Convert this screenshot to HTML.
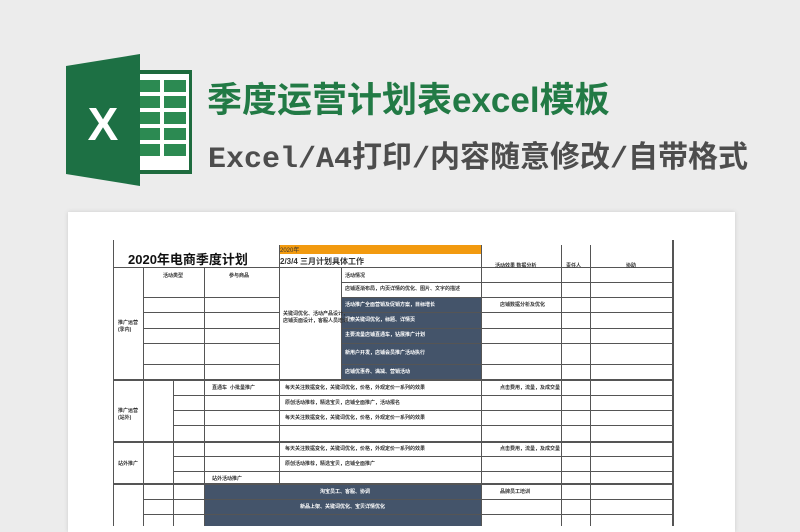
<!DOCTYPE html>
<html><head><meta charset="utf-8"><style>
body{margin:0;width:800px;height:526px;overflow:hidden;background:#ececec;font-family:"Liberation Sans","Noto Sans CJK SC",sans-serif;position:relative}
.a{position:absolute}
.h{position:absolute;height:1px;background:#555}
.v{position:absolute;width:1px;background:#555}
.t{position:absolute;font-size:5px;color:#333;white-space:nowrap;font-weight:bold}
</style></head><body>
<svg class="a" style="left:62px;top:54px" width="135" height="134" viewBox="0 0 135 134">
<rect x="68" y="16" width="62" height="104" fill="#1e6b3e"/>
<rect x="72" y="20" width="55" height="96" fill="#fff"/>
<g fill="#2c8a52">
<rect x="78" y="26" width="20" height="12"/><rect x="102" y="26" width="22" height="12"/>
<rect x="78" y="42" width="20" height="12"/><rect x="102" y="42" width="22" height="12"/>
<rect x="78" y="58" width="20" height="12"/><rect x="102" y="58" width="22" height="12"/>
<rect x="78" y="74" width="20" height="12"/><rect x="102" y="74" width="22" height="12"/>
<rect x="78" y="90" width="20" height="12"/><rect x="102" y="90" width="22" height="12"/>
</g>
<polygon points="4,12 78,0 78,132 4,120" fill="#1d7044"/>
<text x="41" y="86" fill="#fff" font-size="46" font-weight="bold" text-anchor="middle" font-family="Liberation Sans">X</text>
</svg>
<div class="a" style="left:207px;top:72px;font-size:35px;font-weight:bold;color:#227a45">季度运营计划表excel模板</div>
<div class="a" style="left:208px;top:132px;font-size:30px;color:#4d4d4d;font-weight:bold;font-family:'Liberation Mono','Noto Sans CJK SC',monospace">Excel/A4打印/内容随意修改/自带格式</div>
<div class="a" style="left:68px;top:212px;width:667px;height:320px;background:#fff;box-shadow:0 0 4px #ccc"></div>
<div class="a" style="left:279px;top:245px;width:202px;height:9px;background:#f29a0f"></div>
<div class="t" style="left:280px;top:245px;font-size:6px;color:#333;font-weight:normal">2020年</div>
<div class="t" style="left:280px;top:256px;font-size:8px">2/3/4 三月计划具体工作</div>
<div class="t" style="left:128px;top:249px;font-size:13px;color:#111">2020年电商季度计划</div>
<div class="a" style="left:341px;top:297px;width:140px;height:82px;background:#44546a"></div>
<div class="a" style="left:204px;top:483px;width:277px;height:43px;background:#44546a"></div>
<div class="h" style="left:113px;top:267px;width:559px"></div>
<div class="h" style="left:341px;top:282px;width:331px"></div>
<div class="h" style="left:143px;top:297px;width:136px"></div><div class="h" style="left:341px;top:297px;width:331px"></div>
<div class="h" style="left:341px;top:312px;width:331px"></div>
<div class="h" style="left:143px;top:312px;width:136px"></div>
<div class="h" style="left:143px;top:328px;width:136px"></div><div class="h" style="left:341px;top:328px;width:331px"></div>
<div class="h" style="left:143px;top:343px;width:136px"></div><div class="h" style="left:341px;top:343px;width:331px"></div>
<div class="h" style="left:143px;top:364px;width:136px"></div><div class="h" style="left:341px;top:364px;width:331px"></div>
<div class="h" style="left:113px;top:379px;width:559px;height:2px"></div>
<div class="h" style="left:173px;top:395px;width:499px"></div>
<div class="h" style="left:173px;top:410px;width:499px"></div>
<div class="h" style="left:173px;top:425px;width:499px"></div>
<div class="h" style="left:113px;top:441px;width:559px;height:2px"></div>
<div class="h" style="left:173px;top:456px;width:499px"></div>
<div class="h" style="left:173px;top:471px;width:499px"></div>
<div class="h" style="left:113px;top:483px;width:559px;height:2px"></div>
<div class="h" style="left:143px;top:499px;width:529px"></div>
<div class="h" style="left:143px;top:514px;width:529px"></div>
<div class="v" style="left:113px;top:240px;height:286px"></div>
<div class="v" style="left:143px;top:267px;height:259px"></div>
<div class="v" style="left:173px;top:379px;height:147px"></div>
<div class="v" style="left:204px;top:267px;height:259px"></div>
<div class="v" style="left:279px;top:245px;height:238px"></div>
<div class="v" style="left:341px;top:267px;height:112px"></div>
<div class="v" style="left:481px;top:245px;height:281px"></div>
<div class="v" style="left:561px;top:245px;height:281px"></div>
<div class="v" style="left:590px;top:245px;height:281px"></div>
<div class="v" style="left:672px;top:240px;height:286px;width:2px"></div>
<div class="t" style="left:163px;top:272px">活动类型</div>
<div class="t" style="left:229px;top:272px">参与商品</div>
<div class="t" style="left:345px;top:272px">活动情况</div>
<div class="t" style="left:495px;top:262px">活动效果 数据分析</div>
<div class="t" style="left:566px;top:262px">责任人</div>
<div class="t" style="left:626px;top:262px">协助</div>
<div class="t" style="left:118px;top:319px">推广运营<br>(季内)</div>
<div class="t" style="left:118px;top:407px">推广运营<br>(站外)</div>
<div class="t" style="left:118px;top:460px">站外推广</div>
<div class="t" style="left:345px;top:285px">店铺逐渐布局，内页详情的优化、图片、文字的描述</div>
<div class="t" style="left:345px;top:301px;color:#fff">活动推广全面营销及促销方案，目标增长</div>
<div class="t" style="left:345px;top:316px;color:#fff">搜索关键词优化，标题、详情页</div>
<div class="t" style="left:345px;top:331px;color:#fff">主要流量店铺直通车，钻展推广计划</div>
<div class="t" style="left:345px;top:349px;color:#fff">新用户开发，店铺会员推广活动执行</div>
<div class="t" style="left:345px;top:368px;color:#fff">店铺优惠券、满减、营销活动</div>
<div class="t" style="left:283px;top:310px">关键词优化、活动产品设计，<br>店铺页面设计，客服人员培训</div>
<div class="t" style="left:320px;top:488px;color:#fff">淘宝员工、客服、协调</div>
<div class="t" style="left:300px;top:503px;color:#fff">新品上架、关键词优化、宝贝详情优化</div>
<div class="t" style="left:285px;top:384px">每天关注数据变化，关键词优化，价格，外观定价一系列的效果</div>
<div class="t" style="left:285px;top:399px">原创活动推荐，精选宝贝，店铺全面推广，活动报名</div>
<div class="t" style="left:285px;top:414px">每天关注数据变化，关键词优化，价格，外观定价一系列的效果</div>
<div class="t" style="left:285px;top:445px">每天关注数据变化，关键词优化，价格，外观定价一系列的效果</div>
<div class="t" style="left:285px;top:460px">原创活动推荐，精选宝贝，店铺全面推广</div>
<div class="t" style="left:500px;top:301px">店铺数据分析及优化</div>
<div class="t" style="left:500px;top:384px">点击费用，流量，及成交量</div>
<div class="t" style="left:500px;top:445px">点击费用，流量，及成交量</div>
<div class="t" style="left:500px;top:488px">品牌员工培训</div>
<div class="t" style="left:212px;top:384px">直通车</div><div class="t" style="left:230px;top:384px">小批量推广</div>
<div class="t" style="left:212px;top:475px">站外活动推广</div>
</body></html>
